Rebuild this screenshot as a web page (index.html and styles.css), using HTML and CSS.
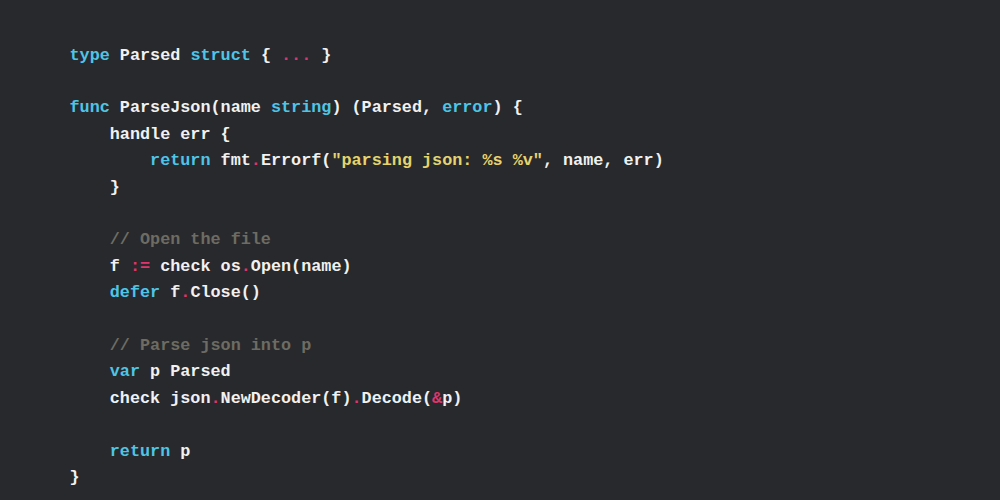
FILE: index.html
```html
<!DOCTYPE html>
<html>
<head>
<meta charset="utf-8">
<link rel="stylesheet" href="styles.css">
</head>
<body>
<main class="page">
<pre class="code"><code class="src"><span class="kw">type</span> Parsed <span class="kw">struct</span> { <span class="op">...</span> }

<span class="kw">func</span> ParseJson(name <span class="kw">string</span>) (Parsed, <span class="kw">error</span>) {
    handle err {
        <span class="kw">return</span> fmt<span class="op">.</span>Errorf(<span class="str">"parsing json: %s %v"</span>, name, err)
    }

    <span class="cm">// Open the file</span>
    f <span class="op">:=</span> check os<span class="op">.</span>Open(name)
    <span class="kw">defer</span> f<span class="op">.</span>Close()

    <span class="cm">// Parse json into p</span>
    <span class="kw">var</span> p Parsed
    check json<span class="op">.</span>NewDecoder(f)<span class="op">.</span>Decode(<span class="op">&amp;</span>p)

    <span class="kw">return</span> p
}</code></pre>
</main>
</body>
</html>
```

FILE: styles.css
```css
html, body {
  margin: 0;
  padding: 0;
  background: #28292d;
}
.page {
  width: 1000px;
  height: 500px;
  box-sizing: border-box;
  padding: 42.5px 0 0 69.5px;
  overflow: hidden;
}
.code {
  margin: 0;
  font-family: "Liberation Mono", "Courier New", monospace;
  font-weight: bold;
  font-size: 16.8px;
  line-height: 26.4px;
  color: #f1f1f1;
}
.src {
  font-family: "Liberation Mono", "Courier New", monospace;
  font-weight: bold;
  font-size: 16.8px;
  line-height: 26.4px;
}
.kw { color: #4ec5e6; }
.op { color: #e0356c; }
.str { color: #e6d46c; }
.cm { color: #6e6c62; }
```
